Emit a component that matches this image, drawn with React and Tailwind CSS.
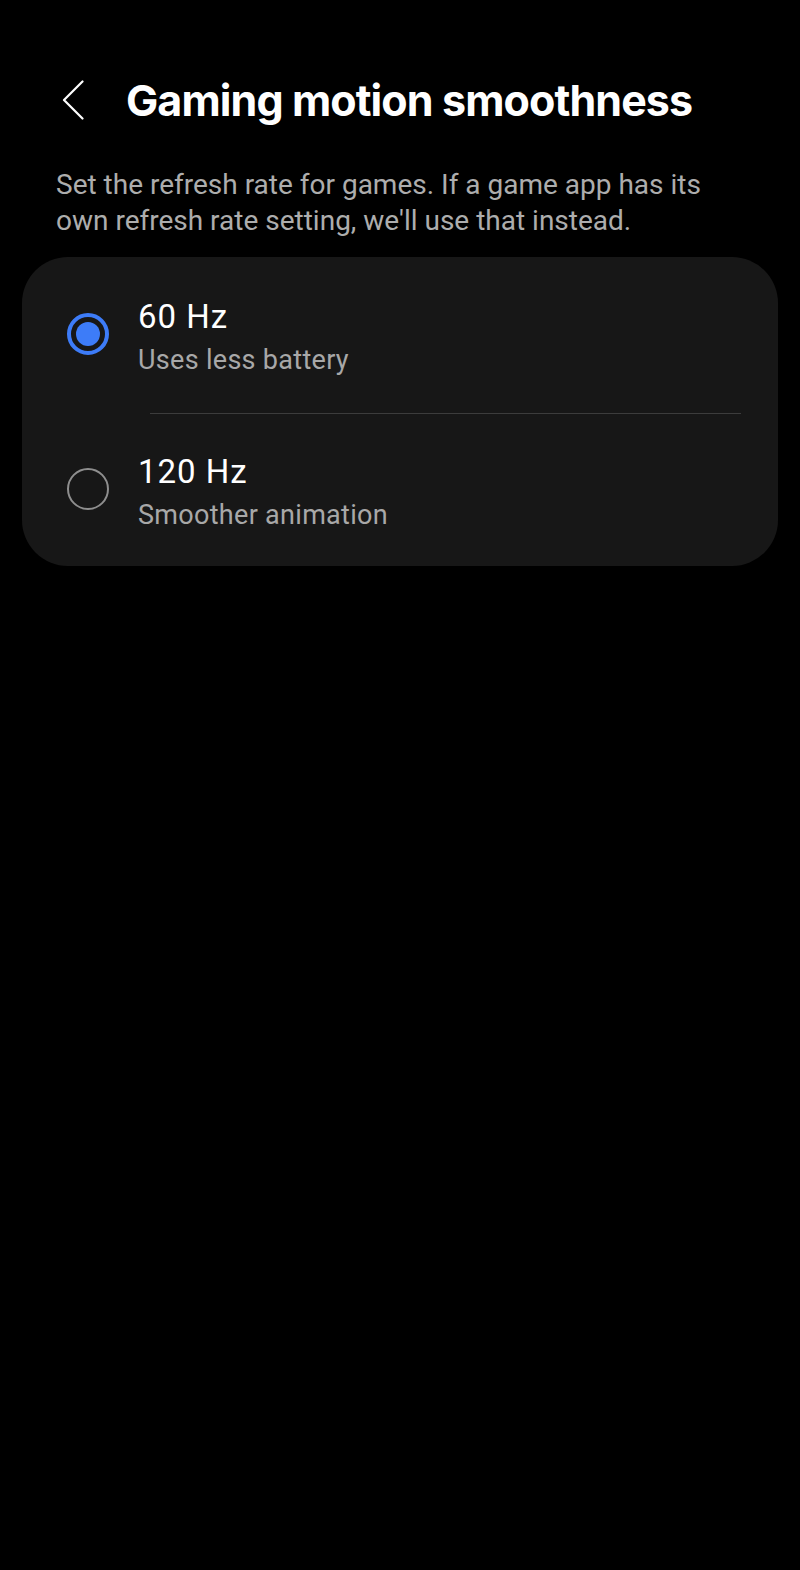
import React from "react";

function Radio({ checked }) {
  if (checked) {
    return (
      <div className="w-[42px] h-[42px] rounded-full border-[4px] border-[#3d7cf8] flex items-center justify-center shrink-0">
        <div className="w-[24px] h-[24px] rounded-full bg-[#3d7cf8]" />
      </div>
    );
  }
  return <div className="w-[42px] h-[42px] rounded-full border-[2.5px] border-[#8e8e8e] shrink-0" />;
}

function Row({ checked, title, sub, pt, pb }) {
  return (
    <div className={`flex ${pt} ${pb} pl-[45px]`}>
      <div className="mt-[16px]">
        <Radio checked={checked} />
      </div>
      <div className="ml-[29px] flex flex-col">
        <div className="text-[33px] leading-[40px] tracking-[1px] text-white">{title}</div>
        <div className="mt-[6px] text-[27px] leading-[34px] tracking-[0.3px] text-[#a8a8a8]">{sub}</div>
      </div>
    </div>
  );
}

export default function App() {
  return (
    <div
      className="w-[800px] min-h-[1570px] bg-black pt-[72px] flow-root"
      style={{ fontFamily: "Roboto, 'Noto Sans', sans-serif" }}
    >
      <div className="flex items-center h-[56px]">
        <div className="ml-[62px] w-[22px] h-[40px] flex items-center">
          <svg width="22" height="40" viewBox="0 0 22 40" fill="none">
            <path d="M20.5 1.5 L2 20 L20.5 38.5" stroke="#ffffff" strokeWidth="2.2" strokeLinecap="round" strokeLinejoin="round" />
          </svg>
        </div>
        <h1
          className="ml-[42px] text-[43px] leading-[56px] font-bold text-white tracking-[-0.9px]"
          style={{ fontFamily: "Inter, 'Noto Sans', sans-serif" }}
        >
          Gaming motion smoothness
        </h1>
      </div>
      <p className="mt-[39px] pl-[56px] pr-[40px] text-[28px] leading-[36px] text-[#adadad]">
        Set the refresh rate for games. If a game app has its own refresh rate setting, we'll use that instead.
      </p>
      <div className="mx-[22px] mt-[18px] rounded-[46px] bg-[#171717]">
        <Row checked title="60 Hz" sub="Uses less battery" pt="pt-[40px]" pb="pb-[36px]" />
        <div className="ml-[128px] mr-[37px] h-px bg-[#3c3c3c]" />
        <Row title="120 Hz" sub="Smoother animation" pt="pt-[38px]" pb="pb-[34px]" />
      </div>
    </div>
  );
}
